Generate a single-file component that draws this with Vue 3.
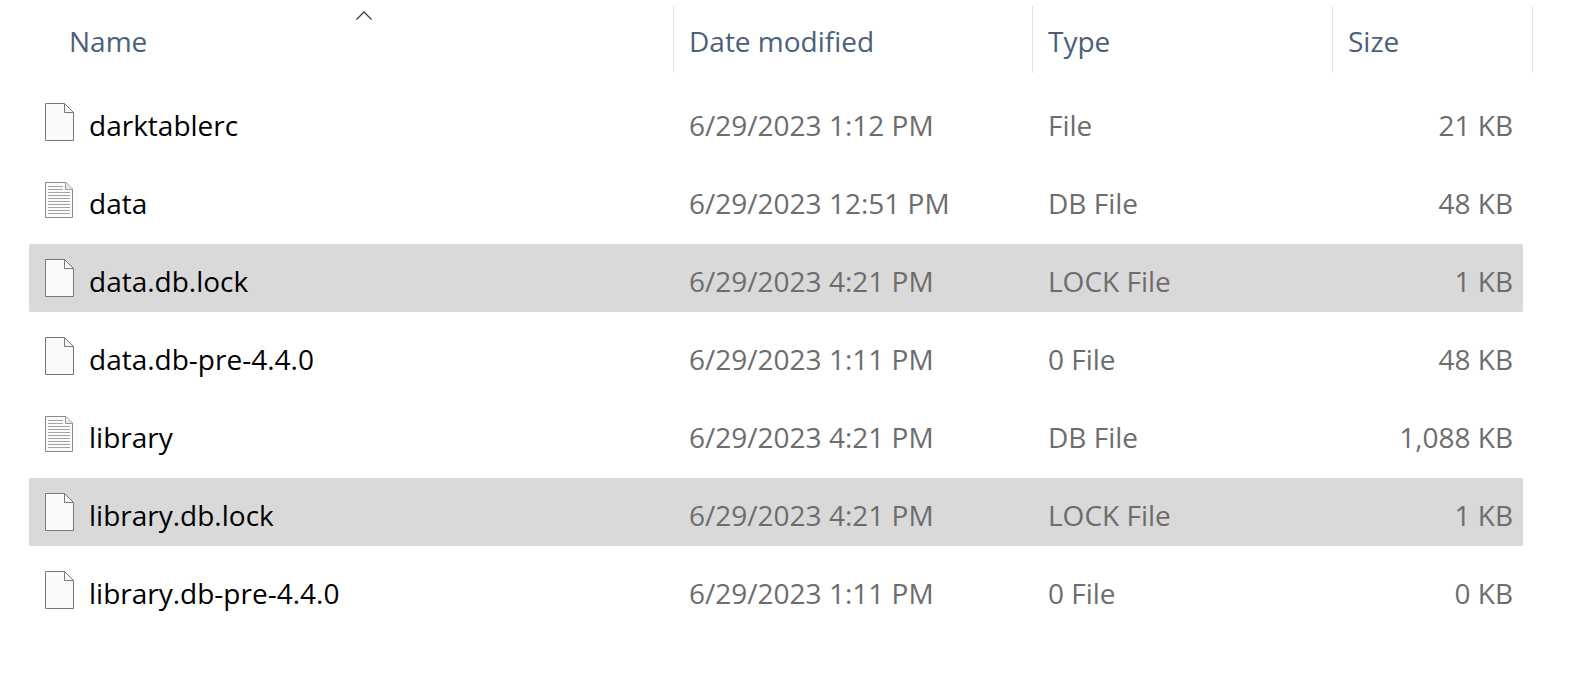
<template>
  <main class="file-list">
    <table class="details">
      <colgroup>
        <col>
        <col class="col-date">
        <col class="col-type">
        <col class="col-size">
      </colgroup>
      <thead>
        <tr>
          <th v-for="col in columns" :key="col.key" scope="col" :class="'head-' + col.key">
            <button type="button" class="head-button" @click="sortBy(col.key)">
              {{ col.label }}
              <svg v-if="sortKey === col.key" class="sort-arrow" :class="{ descending: !ascending }" width="16" height="9" viewBox="0 0 16 9">
                <path d="M0.5 8.5 L8 1 L15.5 8.5" fill="none" stroke="#404040" stroke-width="1.3" />
              </svg>
            </button>
          </th>
        </tr>
      </thead>
      <tbody>
        <tr v-for="file in sortedFiles" :key="file.name" :class="{ selected: selected.includes(file.name) }" @click="toggle(file.name)">
          <td>
            <div class="name-cell">
              <svg v-if="file.icon === 'text'" class="icon" width="30" height="38" viewBox="0 0 30 38">
                <path d="M0.5 1.5 H21 L27.5 8 V36.5 H0.5 Z" fill="#fafafa" stroke="#8a8a8a" />
                <path d="M20.5 1.5 V8.5 H27.5" fill="#e8e8e8" stroke="#9a9a9a" />
                <path d="M3 5.5 H18 M3 8.5 H18 M3 11.5 H25 M3 14.5 H25 M3 17.5 H25 M3 20.5 H25 M3 23.5 H25 M3 26.5 H25 M3 29.5 H25 M3 32.5 H25" stroke="#a4a4a4" />
              </svg>
              <svg v-else class="icon" width="30" height="38" viewBox="0 0 30 38">
                <path d="M0.5 0.5 H19.5 L28.5 9.5 V37.5 H0.5 Z" fill="#fafafa" stroke="#777777" />
                <path d="M19.5 0.5 V9.5 H28.5" fill="none" stroke="#777777" />
              </svg>
              <span class="name">{{ file.name }}</span>
            </div>
          </td>
          <td>{{ file.modified }}</td>
          <td>{{ file.type }}</td>
          <td class="size">{{ file.size.toLocaleString('en-US') }} KB</td>
        </tr>
      </tbody>
    </table>
  </main>
</template>

<script setup>
import { ref, computed } from 'vue';

const columns = [
  { key: 'name', label: 'Name' },
  { key: 'modified', label: 'Date modified' },
  { key: 'type', label: 'Type' },
  { key: 'size', label: 'Size' }
];

const files = [
  { name: 'darktablerc', modified: '6/29/2023 1:12 PM', type: 'File', size: 21, icon: 'blank' },
  { name: 'data', modified: '6/29/2023 12:51 PM', type: 'DB File', size: 48, icon: 'text' },
  { name: 'data.db.lock', modified: '6/29/2023 4:21 PM', type: 'LOCK File', size: 1, icon: 'blank' },
  { name: 'data.db-pre-4.4.0', modified: '6/29/2023 1:11 PM', type: '0 File', size: 48, icon: 'blank' },
  { name: 'library', modified: '6/29/2023 4:21 PM', type: 'DB File', size: 1088, icon: 'text' },
  { name: 'library.db.lock', modified: '6/29/2023 4:21 PM', type: 'LOCK File', size: 1, icon: 'blank' },
  { name: 'library.db-pre-4.4.0', modified: '6/29/2023 1:11 PM', type: '0 File', size: 0, icon: 'blank' }
];

const selected = ref(['data.db.lock', 'library.db.lock']);
const sortKey = ref('name');
const ascending = ref(true);

const sortValue = (file) => {
  if (sortKey.value === 'modified') return Date.parse(file.modified);
  return file[sortKey.value];
};

const sortedFiles = computed(() => {
  // the list is already in name order
  if (sortKey.value === 'name') return ascending.value ? files : [...files].reverse();
  const dir = ascending.value ? 1 : -1;
  return [...files].sort((a, b) => (sortValue(a) > sortValue(b) ? dir : sortValue(a) < sortValue(b) ? -dir : 0));
});

const sortBy = (key) => {
  ascending.value = sortKey.value === key ? !ascending.value : true;
  sortKey.value = key;
};

const toggle = (name) => {
  selected.value = selected.value.includes(name)
    ? selected.value.filter((n) => n !== name)
    : [...selected.value, name];
};
</script>

<style>
body { margin: 0; background: #ffffff; }
</style>

<style scoped>
.file-list {
  padding: 0 47px 0 29px;
  overflow: hidden;
  font-family: "Segoe UI", "Open Sans", "Noto Sans", sans-serif;
  font-size: 28px;
  line-height: 38px;
  color: #6d6d6d;
}

/* vertical spacing keeps the 10px gap between row highlights */
.details { width: 100%; margin-top: -10px; table-layout: fixed; border-collapse: separate; border-spacing: 0 10px; }
.col-date { width: 359px; }
.col-type { width: 300px; }
.col-size { width: 190px; }

th { height: 72px; padding: 6px 0 0; vertical-align: top; text-align: left; font-weight: 400; }
.head-button {
  position: relative;
  display: block;
  width: 100%;
  height: 67px;
  padding: 2px 15px 0;
  border: none;
  border-right: 1px solid #e2e2e2;
  background: none;
  color: #4c607a;
  font: inherit;
  text-align: left;
  white-space: nowrap;
  cursor: pointer;
}
.head-name { padding-left: 25px; }
.head-size .head-button { width: calc(100% + 10px); }
.sort-arrow { position: absolute; top: 5px; left: calc(50% - 8px); }
.sort-arrow.descending { transform: rotate(180deg); }

td { height: 68px; padding: 6px 15px 0; box-sizing: border-box; white-space: nowrap; }
td:first-child { padding: 0 16px; border-radius: 2px 0 0 2px; }
td:last-child { padding-right: 10px; border-radius: 0 2px 2px 0; }
.selected td { background: #d9d9d9; }

.name-cell { display: flex; align-items: center; gap: 14px; }
.icon { flex: none; }
.name { padding-top: 6px; color: #000000; }
.size { text-align: right; }
</style>
